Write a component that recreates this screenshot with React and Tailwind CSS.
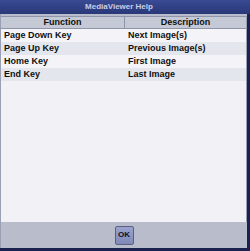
const rows = [
  { fn: "Page Down Key", desc: "Next Image(s)" },
  { fn: "Page Up Key", desc: "Previous Image(s)" },
  { fn: "Home Key", desc: "First Image" },
  { fn: "End Key", desc: "Last Image" },
]

function App() {
  return (
    <div
      className="w-[250px] h-[251px] flex flex-col bg-[#1c2250] overflow-hidden"
      style={{ fontFamily: '"Liberation Sans", Arial, sans-serif' }}
    >
      <div className="h-[14px] shrink-0 flex items-center justify-center pr-[12px] bg-gradient-to-b from-[#3a4a94] to-[#283878] text-[#c8cee8] text-[8px] font-bold leading-none">
        MediaViewer Help
      </div>

      <div className="flex-1 flex flex-col mr-[3px] border-l border-[#9aa0b4] bg-[#b9bdcb]">
        <div className="flex-1 flex flex-col mt-[2px] bg-[#f2f2f6] border-r border-[#9aa0b4]">
          <div className="flex h-[13px] bg-[#c5c9d5] border-y border-[#9096aa] text-[9px] font-bold text-[#101010] leading-none">
            <div className="w-[124px] flex items-center justify-center border-r border-[#9096aa]">
              Function
            </div>
            <div className="flex-1 flex items-center justify-center">
              Description
            </div>
          </div>

          {rows.map((row, i) => (
            <div
              key={row.fn}
              className={`flex h-[13px] items-center text-[9px] font-bold text-[#101010] leading-none ${i % 2 === 1 ? "bg-[#e4e6ee]" : "bg-[#f4f4f8]"}`}
            >
              <div className="w-[124px] pl-[3px]">{row.fn}</div>
              <div className="flex-1 pl-[3px]">{row.desc}</div>
            </div>
          ))}
        </div>

        <div className="h-[26px] shrink-0 flex items-center justify-center bg-[#b9bdcb]">
          <button className="w-[19px] h-[19px] flex items-center justify-center rounded-[2px] border border-[#5a6080] bg-gradient-to-b from-[#9aa2cc] to-[#8088b8] text-[8px] font-bold text-[#101020] leading-none">
            OK
          </button>
        </div>
      </div>

      <div className="h-[3px] shrink-0 bg-[#1c2250]" />
    </div>
  )
}

export default App
